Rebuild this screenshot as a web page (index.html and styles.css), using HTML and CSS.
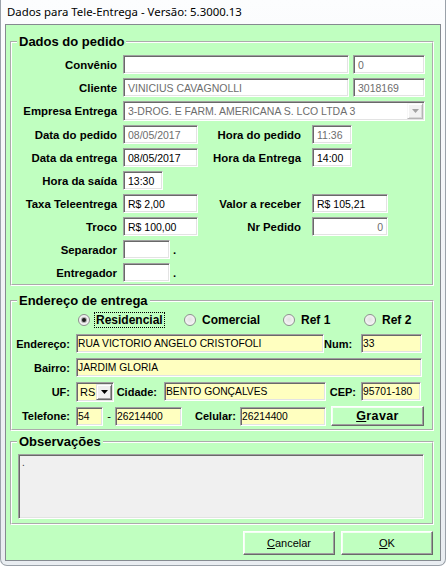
FILE: index.html
```html
<!DOCTYPE html>
<html lang="pt-BR">
<head>
<meta charset="utf-8">
<title>Dados para Tele-Entrega</title>
<link rel="stylesheet" href="styles.css">
</head>
<body>
<div class="window">
  <div class="titlebar">Dados para Tele-Entrega - Versão: 5.3000.13</div>
  <div class="client">
    <fieldset class="group g1">
      <legend>Dados do pedido</legend>
      <div class="rows">
        <div class="row">
          <span class="lbl">Convênio</span>
          <span class="field w226"></span>
          <span class="field w72 dis ml4">0</span>
        </div>
        <div class="row">
          <span class="lbl">Cliente</span>
          <span class="field w226 dis">VINICIUS CAVAGNOLLI</span>
          <span class="field w72 dis ml4">3018169</span>
        </div>
        <div class="row tall">
          <span class="lbl">Empresa Entrega</span>
          <span class="combo w302">
            <span class="ctext dis">3-DROG. E FARM. AMERICANA S. LCO LTDA 3</span>
            <span class="cbtn off"><svg width="7" height="4" viewBox="0 0 7 4"><polygon points="0,0 7,0 3.5,4" fill="#a3a3a3"/></svg></span>
          </span>
        </div>
        <div class="row">
          <span class="lbl">Data do pedido</span>
          <span class="field w75 dis">08/05/2017</span>
          <span class="lbl2">Hora do pedido</span>
          <span class="field w40 dis">11:36</span>
        </div>
        <div class="row">
          <span class="lbl">Data da entrega</span>
          <span class="field w75">08/05/2017</span>
          <span class="lbl2">Hora da Entrega</span>
          <span class="field w40">14:00</span>
        </div>
        <div class="row">
          <span class="lbl">Hora da saída</span>
          <span class="field w40">13:30</span>
        </div>
        <div class="row">
          <span class="lbl">Taxa Teleentrega</span>
          <span class="field w75">R$ 2,00</span>
          <span class="lbl2">Valor a receber</span>
          <span class="field w76">R$ 105,21</span>
        </div>
        <div class="row">
          <span class="lbl">Troco</span>
          <span class="field w75">R$ 100,00</span>
          <span class="lbl2">Nr Pedido</span>
          <span class="field w76 dis right">0</span>
        </div>
        <div class="row">
          <span class="lbl">Separador</span>
          <span class="field w47"></span>
          <span class="dot">.</span>
        </div>
        <div class="row">
          <span class="lbl">Entregador</span>
          <span class="field w47"></span>
          <span class="dot">.</span>
        </div>
      </div>
    </fieldset>

    <fieldset class="group g2">
      <legend>Endereço de entrega</legend>
      <div class="radios">
        <span class="ropt r1 focus"><span class="radio on"><span class="rdot"></span></span><span class="rtext">Residencial</span></span>
        <span class="ropt r2"><span class="radio"></span><span class="rtext">Comercial</span></span>
        <span class="ropt r3"><span class="radio"></span><span class="rtext">Ref 1</span></span>
        <span class="ropt"><span class="radio"></span><span class="rtext">Ref 2</span></span>
      </div>
      <div class="rows2">
        <div class="row">
          <span class="lbl3 w58 mr6">Endereço:</span>
          <span class="field yel w248">RUA VICTORIO ANGELO CRISTOFOLI</span>
          <span class="lbl3 w28 mr9">Num:</span>
          <span class="field yel w61">33</span>
        </div>
        <div class="row">
          <span class="lbl3 w58 mr6">Bairro:</span>
          <span class="field yel w346">JARDIM GLORIA</span>
        </div>
        <div class="row">
          <span class="lbl3 w58 mr6">UF:</span>
          <span class="combo yel w38">
            <span class="ctext">RS</span>
            <span class="cbtn"><svg width="7" height="4" viewBox="0 0 7 4"><polygon points="0,0 7,0 3.5,4" fill="#000"/></svg></span>
          </span>
          <span class="lbl3 w43 mr7">Cidade:</span>
          <span class="field yel w162">BENTO GONÇALVES</span>
          <span class="lbl3 w30 mr5">CEP:</span>
          <span class="field yel w60">95701-180</span>
        </div>
        <div class="row tall">
          <span class="lbl3 w58 mr6">Telefone:</span>
          <span class="field yel w27">54</span>
          <span class="dash">-</span>
          <span class="field yel w67">26214400</span>
          <span class="lbl3 w54 mr4">Celular:</span>
          <span class="field yel w86">26214400</span>
          <button class="btn gravar" type="button"><u>G</u>ravar</button>
        </div>
      </div>
    </fieldset>

    <fieldset class="group g3">
      <legend>Observações</legend>
      <div class="memo">.</div>
    </fieldset>

    <div class="buttons">
      <button class="btn" type="button"><u>C</u>ancelar</button>
      <button class="btn" type="button"><u>O</u>K</button>
    </div>
  </div>
</div>
</body>
</html>
```

FILE: styles.css
```css
* { box-sizing: border-box; }

html, body {
  margin: 0;
  padding: 0;
  background: #ffffff;
}

body {
  font-family: "Liberation Sans", Arial, sans-serif;
  color: #000;
}

.window {
  width: 446px;
  height: 566px;
  display: flex;
  flex-direction: column;
  padding: 0 4px 4px 4px;
  background: linear-gradient(to bottom, #fcfdfe 0%, #f2f4f7 40%, #e9edf1 100%);
  border: 1px solid #9aa1a9;
  border-top: none;
  border-radius: 0 0 7px 7px;
}

.titlebar {
  height: 24px;
  flex: none;
  padding-left: 2px;
  font-family: "Noto Sans", "Open Sans", sans-serif;
  font-size: 11.4px;
  line-height: 24px;
  color: #000;
  white-space: nowrap;
}

.client {
  height: 537px;
  flex: none;
  display: flex;
  flex-direction: column;
  padding: 9px 0 5px 0;
  background: #c0ffc0;
  border: 1px solid #858a90;
}

/* group boxes */
.group {
  margin: 0 6px 0 4px;
  border: 2px groove #ffffff;
  min-width: 0;
}

.group legend {
  margin-left: 5px;
  padding: 0 2px;
  font: bold 13px/16px "Liberation Sans", Arial, sans-serif;
  color: #000;
}

.g1 { padding: 5px 0 2px 0; }
.g2 { margin-top: 7px; padding: 2px 0 3px 0; }
.g3 { margin-top: 3px; padding: 4px 0 4px 0; }

.rows {
  display: flex;
  flex-direction: column;
  gap: 4px;
}

.rows2 {
  display: flex;
  flex-direction: column;
  gap: 5px;
  margin-top: 5px;
}

.row {
  display: flex;
  align-items: center;
  height: 19px;
}

.row.tall { height: 20px; }

.lbl {
  width: 105px;
  margin-right: 6px;
  text-align: right;
  font: bold 11.4px "Liberation Sans", Arial, sans-serif;
  white-space: nowrap;
}

.lbl2 {
  width: 103px;
  margin-right: 11px;
  text-align: right;
  font: bold 11.4px "Liberation Sans", Arial, sans-serif;
  white-space: nowrap;
}

.lbl3 {
  text-align: right;
  font: bold 11px "Liberation Sans", Arial, sans-serif;
  white-space: nowrap;
}

.dot {
  margin-left: 3px;
  font: bold 11.4px "Liberation Sans", Arial, sans-serif;
}

.dash {
  width: 12px;
  text-align: center;
  font: 11px "Liberation Sans", Arial, sans-serif;
}

/* sunken edit fields */
.field, .combo, .memo {
  background: #ffffff;
  border: 1px solid;
  border-color: #a0a0a0 #ffffff #ffffff #a0a0a0;
  box-shadow: inset 1px 1px 0 #696969, inset -1px -1px 0 #e3e3e3;
}

.field {
  height: 19px;
  display: flex;
  align-items: center;
  padding: 0 4px 0 4px;
  font: 10.5px "Liberation Sans", Arial, sans-serif;
  color: #000;
  white-space: nowrap;
  overflow: hidden;
}

.field.right { justify-content: flex-end; }
.dis { color: #6d6d6d; }

.yel {
  background: #ffffc0;
  font-size: 10.3px;
  padding-left: 1px;
}

.combo {
  height: 20px;
  display: flex;
  align-items: center;
  justify-content: space-between;
  padding: 0 1px 0 4px;
  font: 10.5px "Liberation Sans", Arial, sans-serif;
  white-space: nowrap;
  overflow: hidden;
}

.combo.yel { padding-left: 3px; font-size: 11px; }

.cbtn {
  width: 16px;
  height: 16px;
  flex: none;
  display: flex;
  align-items: center;
  justify-content: center;
  background: #f0f0f0;
  border: 1px solid;
  border-color: #e3e3e3 #696969 #696969 #e3e3e3;
  box-shadow: inset 1px 1px 0 #ffffff, inset -1px -1px 0 #a0a0a0;
}

.cbtn.off {
  background: #f2f2f2;
  border-color: #f7f7f7 #b5b5b5 #b5b5b5 #f7f7f7;
  box-shadow: inset 1px 1px 0 #ffffff, inset -1px -1px 0 #d8d8d8;
}

.cbtn svg { display: block; }

/* widths */
.w226 { width: 226px; }
.w72 { width: 72px; }
.w302 { width: 302px; }
.w75 { width: 75px; }
.w40 { width: 40px; }
.w76 { width: 76px; }
.w47 { width: 47px; }
.w58 { width: 58px; }
.w248 { width: 248px; }
.w28 { width: 28px; }
.w61 { width: 61px; }
.w346 { width: 346px; }
.w38 { width: 38px; }
.w43 { width: 43px; }
.w162 { width: 162px; }
.w30 { width: 30px; }
.w60 { width: 60px; }
.w27 { width: 27px; }
.w67 { width: 67px; }
.w54 { width: 54px; }
.w86 { width: 86px; }

.ml4 { margin-left: 4px; }
.mr4 { margin-right: 4px; }
.mr5 { margin-right: 5px; }
.mr6 { margin-right: 6px; }
.mr7 { margin-right: 7px; }
.mr9 { margin-right: 9px; }

/* radio buttons */
.radios {
  display: flex;
  align-items: center;
  height: 18px;
  padding-left: 66px;
}

.ropt {
  display: flex;
  align-items: center;
  font: bold 12px "Liberation Sans", Arial, sans-serif;
  white-space: nowrap;
}

.r1 { width: 106px; }
.r2 { width: 99px; }
.r3 { width: 81px; }

.radio {
  width: 12px;
  height: 12px;
  flex: none;
  display: flex;
  align-items: center;
  justify-content: center;
  border-radius: 50%;
  border: 1px solid #8e8f8f;
  background: radial-gradient(circle at 50% 45%, #e2e2e2 0%, #eeeeee 45%, #fdfdfd 100%);
}

.rdot {
  width: 4px;
  height: 4px;
  border-radius: 50%;
  background: #1c1c1c;
  box-shadow: 0 0 0 1px rgba(60, 60, 60, 0.35);
}

.rtext {
  margin-left: 4px;
  padding: 0 1px;
  line-height: 14px;
  border: 1px dotted transparent;
}

.focus .rtext { border-color: #000; }

/* memo */
.memo {
  margin-left: 6px;
  width: 406px;
  height: 65px;
  background: #f0f0f0;
  padding: 2px 3px;
  font: 10px/12px "Liberation Sans", Arial, sans-serif;
  color: #333;
}

/* buttons */
.buttons {
  margin-top: auto;
  display: flex;
  justify-content: flex-end;
  gap: 6px;
  padding-right: 7px;
}

.btn {
  width: 92px;
  height: 24px;
  margin: 0;
  padding: 0;
  display: flex;
  align-items: center;
  justify-content: center;
  background: #c0ffc0;
  border: 1px solid;
  border-color: #ffffff #696969 #696969 #ffffff;
  box-shadow: inset -1px -1px 0 #a0a0a0, inset 1px 1px 0 #f4fff4;
  font: 11px "Liberation Sans", Arial, sans-serif;
  color: #000;
}

.btn.gravar {
  width: 93px;
  height: 20px;
  margin-left: 5px;
  font-weight: bold;
  font-size: 12.5px;
  letter-spacing: 0.4px;
}
```
